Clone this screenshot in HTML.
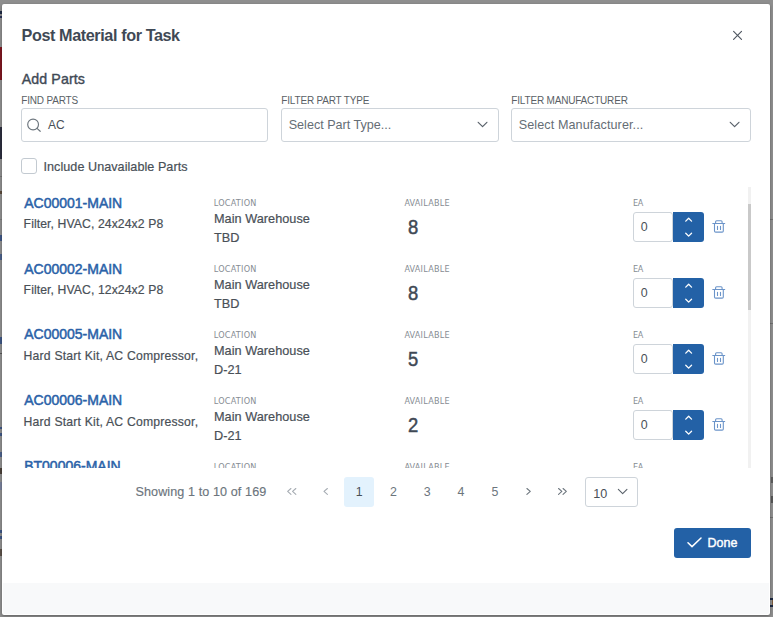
<!DOCTYPE html>
<html lang="en">
<head>
<meta charset="utf-8">
<title>Post Material for Task</title>
<style>
*{box-sizing:border-box;margin:0;padding:0}
html,body{width:773px;height:617px;overflow:hidden}
body{background:#8e8e8e;font-family:"Liberation Sans",sans-serif;color:#495057;position:relative}
.bg{position:absolute;left:0;top:0;width:773px;height:617px;overflow:hidden}
.bg i{position:absolute;display:block}
.dialog{position:absolute;left:2px;top:4px;width:768px;height:610.8px;background:#fff;border-radius:2px;box-shadow:0 1px 3px rgba(0,0,0,.32)}
.abs{position:absolute;white-space:nowrap;line-height:1}
.title{left:19.5px;top:23px;font-size:16.2px;font-weight:700;color:#3f4955;letter-spacing:-.4px}
.close{left:730px;top:26px;width:12px;height:12px}
.h2{left:19.7px;top:67.6px;font-size:14.2px;font-weight:400;color:#3f4955;letter-spacing:.12px;-webkit-text-stroke:.38px #3f4955}
.lbl{font-size:10px;color:#5a5f66;text-transform:uppercase;letter-spacing:-.18px}
.field{position:absolute;top:104px;height:33.5px;border:1px solid #ced4da;border-radius:3px;background:#fff}
.field .txt{position:absolute;top:8.5px;font-size:12.6px;line-height:14px;white-space:nowrap}
.ph{color:#656d75}
.chk{position:absolute;left:19px;top:154px;width:16px;height:16px;border:1px solid #c3cad1;border-radius:3px;background:#fff}
.chklbl{left:41.5px;top:156.5px;font-size:12.6px;color:#495057;letter-spacing:.05px;-webkit-text-stroke:.2px #495057}
.list{position:absolute;left:16px;top:182px;width:734px;height:282px;overflow:hidden}
.row{position:absolute;left:0;width:734px;height:66px}
.pn{left:6.2px;top:10.2px;font-size:14px;font-weight:400;color:#2a62a8;letter-spacing:0;-webkit-text-stroke:.5px #2a62a8}
.ds{left:5.6px;top:31.6px;font-size:12.2px;color:#495057;letter-spacing:.1px;-webkit-text-stroke:.2px #495057}
.cl{font-family:"DejaVu Sans Condensed","Liberation Sans",sans-serif;font-size:9px;color:#868c93;text-transform:uppercase;top:12.5px;letter-spacing:.25px}
.lv{left:196px;font-size:12.7px;color:#495057;letter-spacing:.03px;-webkit-text-stroke:.2px #495057}
.av{left:389.7px;top:31px;font-size:20px;font-weight:400;color:#3f4955;-webkit-text-stroke:.5px #3f4955;transform:scaleX(.92);transform-origin:0 0}
.qty{position:absolute;left:615px;top:26px;width:40px;height:30px;border:1px solid #ced4da;border-radius:3px;background:#fff}
.qty span{position:absolute;left:6.7px;top:7.8px;font-size:12.4px;line-height:13px;color:#495057}
.spin{position:absolute;left:655px;top:26px;width:31px;height:30px;background:#2361a6;border-radius:0 3px 3px 0}
.spin svg{position:absolute;left:0;top:0}
.trash{position:absolute;left:693px;top:32px;width:16px;height:16px}
.track{position:absolute;left:746px;top:182.5px;width:2.9px;height:281.5px;background:#f1f1f1}
.thumb{position:absolute;left:746px;top:199.5px;width:2.9px;height:106px;background:#c9c9c9}
.pg{top:482px;font-size:12.6px;color:#6c757d;letter-spacing:.09px;-webkit-text-stroke:.15px #6c757d}
.pgn{position:absolute;top:473px;width:30px;height:30px;border-radius:3px;text-align:center;font-size:12.4px;line-height:30px;color:#6c757d}
.pgn.on{background:#e3f2fd;color:#495057}
.pgi{position:absolute;top:473px;width:30px;height:30px}
.rpp{position:absolute;left:583px;top:473px;width:53px;height:30px;border:1px solid #ced4da;border-radius:3px;background:#fff}
.rpp span{position:absolute;left:7.3px;top:9px;font-size:12.6px;line-height:14px;color:#495057}
.done{position:absolute;left:672px;top:524px;width:77px;height:30px;background:#2361a6;border-radius:3px;color:#fff}
.done span{position:absolute;left:33.4px;top:8.6px;font-size:12.5px;line-height:13px;font-weight:400;letter-spacing:.1px;-webkit-text-stroke:.4px #fff}
.done svg{position:absolute;left:13px;top:9px}
.footer{position:absolute;left:1px;top:579px;width:766px;height:30.6px;background:#f8f9fa;border-radius:0 0 2px 2px}
</style>
</head>
<body>
<div class="bg">
  <i style="left:0;top:47px;width:2px;height:33px;background:#7e1620"></i>
  <i style="left:0;top:127px;width:2px;height:32px;background:#2b2d3d"></i>
  <i style="left:0;top:11px;width:2px;height:3px;background:#1f2a44"></i><i style="left:0;top:16px;width:2px;height:2px;background:#2a3358"></i>
  <i style="left:0;top:176px;width:2px;height:1px;background:#747474"></i>
  <i style="left:0;top:191px;width:2px;height:3px;background:#5a4a3a"></i>
  <i style="left:0;top:219px;width:2px;height:1px;background:#7a7a7a"></i>
  <i style="left:0;top:235px;width:2px;height:6px;background:#3d5583"></i>
  <i style="left:0;top:254px;width:2px;height:6px;background:#4a5f88"></i>
  <i style="left:0;top:337px;width:2px;height:7px;background:#3d5583"></i>
  <i style="left:0;top:353px;width:2px;height:1px;background:#555"></i>
  <i style="left:0;top:427px;width:2px;height:2px;background:#3d5583"></i><i style="left:0;top:433px;width:2px;height:3px;background:#3d5583"></i>
  <i style="left:0;top:452px;width:2px;height:5px;background:#4a5f88"></i>
  <i style="left:0;top:468px;width:2px;height:6px;background:#4a4038"></i>
  <i style="left:0;top:482px;width:2px;height:8px;background:#777f99"></i>
  <i style="left:0;top:530px;width:2px;height:3px;background:#3d5583"></i><i style="left:0;top:536px;width:2px;height:3px;background:#3d5583"></i>
  <i style="left:0;top:549px;width:2px;height:7px;background:#5a5048"></i>
  <i style="left:770px;top:598px;width:3px;height:2px;background:#1c2740"></i><i style="left:772px;top:600px;width:1px;height:5px;background:#7a5a3c"></i><i style="left:770px;top:605px;width:3px;height:2px;background:#1c2740"></i>
  <i style="left:771px;top:477px;width:2px;height:6px;background:#5c5c5c"></i>
  <i style="left:771px;top:496px;width:2px;height:7px;background:#555"></i>
  <i style="left:770px;top:517px;width:3px;height:1px;background:#6e6e6e"></i>
  <i style="left:770px;top:219px;width:3px;height:1px;background:#6e6e6e"></i>
  <i style="left:770px;top:323px;width:3px;height:1px;background:#6e6e6e"></i>
</div>

<div class="dialog" role="dialog" aria-label="Post Material for Task">
  <div class="abs title">Post Material for Task</div>
  <svg class="abs close" viewBox="0 0 12 12"><path d="M1.6 1.45 L9.5 9.35 M9.5 1.45 L1.6 9.35" stroke="#4f5761" stroke-width="1.15" fill="none" stroke-linecap="round"/></svg>

  <div class="abs h2">Add Parts</div>

  <div class="abs lbl" style="left:19.3px;top:91.5px">Find Parts</div>
  <div class="field" style="left:19px;width:247px">
    <svg style="position:absolute;left:5px;top:9px" width="16" height="16" viewBox="0 0 16 16"><circle cx="6.1" cy="6.5" r="5.4" stroke="#6c757d" stroke-width="1.15" fill="none"/><path d="M10 10.4 L13.2 13.3" stroke="#6c757d" stroke-width="1.15" stroke-linecap="round"/></svg>
    <span class="txt" style="left:26px;top:9px;font-size:12px;color:#495057">AC</span>
  </div>

  <div class="abs lbl" style="left:279.3px;top:91.5px">Filter Part Type</div>
  <div class="field" style="left:279px;width:218px">
    <span class="txt ph" style="left:6.7px">Select Part Type...</span>
    <svg style="position:absolute;left:194px;top:11px" width="14" height="10" viewBox="0 0 14 10"><path d="M2.2 2.3 L6.56 6.7 L10.9 2.3" stroke="#5a626b" stroke-width="1.2" fill="none" stroke-linecap="round" stroke-linejoin="round"/></svg>
  </div>

  <div class="abs lbl" style="left:509.3px;top:91.5px">Filter Manufacturer</div>
  <div class="field" style="left:509px;width:240px">
    <span class="txt ph" style="left:6.7px;letter-spacing:.1px">Select Manufacturer...</span>
    <svg style="position:absolute;left:216px;top:11px" width="14" height="10" viewBox="0 0 14 10"><path d="M2.25 2.3 L6.6 6.7 L10.95 2.3" stroke="#5a626b" stroke-width="1.2" fill="none" stroke-linecap="round" stroke-linejoin="round"/></svg>
  </div>

  <div class="chk"></div>
  <div class="abs chklbl">Include Unavailable Parts</div>

  <div class="list">
    <div class="row" style="top:0px">
      <div class="abs pn">AC00001-MAIN</div>
      <div class="abs ds">Filter, HVAC, 24x24x2 P8</div>
      <div class="abs cl" style="left:195.8px">Location</div>
      <div class="abs lv" style="top:26.5px">Main Warehouse</div>
      <div class="abs lv" style="top:46px">TBD</div>
      <div class="abs cl" style="left:386.4px">Available</div>
      <div class="abs av">8</div>
      <div class="abs cl" style="left:615px;letter-spacing:-.3px">EA</div>
      <div class="qty"><span>0</span></div>
      <div class="spin"><svg width="31" height="30" viewBox="0 0 31 30"><path d="M12.75 9.1 L15.65 6.25 L18.55 9.1 M12.75 21.3 L15.65 24.15 L18.55 21.3" stroke="#fff" stroke-width="1.3" fill="none" stroke-linecap="round" stroke-linejoin="round"/></svg></div>
      <svg class="trash" viewBox="0 0 16 16"><path d="M1.8 5.5 H13.7 M4.6 5.5 V3.8 Q4.6 2.8 5.6 2.8 H10.1 Q11.1 2.8 11.1 3.8 V5.5 M3.5 5.7 V12.9 Q3.5 14.1 4.7 14.1 H11.1 Q12.3 14.1 12.3 12.9 V5.7 M6.5 8.4 V11.4 M9.5 8.4 V11.4" stroke="#6b94c9" stroke-width="1.1" fill="none" stroke-linecap="round" stroke-linejoin="round"/></svg>
    </div>
    <div class="row" style="top:66px">
      <div class="abs pn">AC00002-MAIN</div>
      <div class="abs ds">Filter, HVAC, 12x24x2 P8</div>
      <div class="abs cl" style="left:195.8px">Location</div>
      <div class="abs lv" style="top:26.5px">Main Warehouse</div>
      <div class="abs lv" style="top:46px">TBD</div>
      <div class="abs cl" style="left:386.4px">Available</div>
      <div class="abs av">8</div>
      <div class="abs cl" style="left:615px;letter-spacing:-.3px">EA</div>
      <div class="qty"><span>0</span></div>
      <div class="spin"><svg width="31" height="30" viewBox="0 0 31 30"><path d="M12.75 9.1 L15.65 6.25 L18.55 9.1 M12.75 21.3 L15.65 24.15 L18.55 21.3" stroke="#fff" stroke-width="1.3" fill="none" stroke-linecap="round" stroke-linejoin="round"/></svg></div>
      <svg class="trash" viewBox="0 0 16 16"><path d="M1.8 5.5 H13.7 M4.6 5.5 V3.8 Q4.6 2.8 5.6 2.8 H10.1 Q11.1 2.8 11.1 3.8 V5.5 M3.5 5.7 V12.9 Q3.5 14.1 4.7 14.1 H11.1 Q12.3 14.1 12.3 12.9 V5.7 M6.5 8.4 V11.4 M9.5 8.4 V11.4" stroke="#6b94c9" stroke-width="1.1" fill="none" stroke-linecap="round" stroke-linejoin="round"/></svg>
    </div>
    <div class="row" style="top:132px">
      <div class="abs pn" style="top:9.2px">AC00005-MAIN</div>
      <div class="abs ds" style="letter-spacing:.2px">Hard Start Kit, AC Compressor,</div>
      <div class="abs cl" style="left:195.8px">Location</div>
      <div class="abs lv" style="top:26.5px">Main Warehouse</div>
      <div class="abs lv" style="top:46px">D-21</div>
      <div class="abs cl" style="left:386.4px">Available</div>
      <div class="abs av">5</div>
      <div class="abs cl" style="left:615px;letter-spacing:-.3px">EA</div>
      <div class="qty"><span>0</span></div>
      <div class="spin"><svg width="31" height="30" viewBox="0 0 31 30"><path d="M12.75 9.1 L15.65 6.25 L18.55 9.1 M12.75 21.3 L15.65 24.15 L18.55 21.3" stroke="#fff" stroke-width="1.3" fill="none" stroke-linecap="round" stroke-linejoin="round"/></svg></div>
      <svg class="trash" viewBox="0 0 16 16"><path d="M1.8 5.5 H13.7 M4.6 5.5 V3.8 Q4.6 2.8 5.6 2.8 H10.1 Q11.1 2.8 11.1 3.8 V5.5 M3.5 5.7 V12.9 Q3.5 14.1 4.7 14.1 H11.1 Q12.3 14.1 12.3 12.9 V5.7 M6.5 8.4 V11.4 M9.5 8.4 V11.4" stroke="#6b94c9" stroke-width="1.1" fill="none" stroke-linecap="round" stroke-linejoin="round"/></svg>
    </div>
    <div class="row" style="top:198px">
      <div class="abs pn" style="top:9.2px">AC00006-MAIN</div>
      <div class="abs ds" style="letter-spacing:.2px">Hard Start Kit, AC Compressor,</div>
      <div class="abs cl" style="left:195.8px">Location</div>
      <div class="abs lv" style="top:26.5px">Main Warehouse</div>
      <div class="abs lv" style="top:46px">D-21</div>
      <div class="abs cl" style="left:386.4px">Available</div>
      <div class="abs av">2</div>
      <div class="abs cl" style="left:615px;letter-spacing:-.3px">EA</div>
      <div class="qty"><span>0</span></div>
      <div class="spin"><svg width="31" height="30" viewBox="0 0 31 30"><path d="M12.75 9.1 L15.65 6.25 L18.55 9.1 M12.75 21.3 L15.65 24.15 L18.55 21.3" stroke="#fff" stroke-width="1.3" fill="none" stroke-linecap="round" stroke-linejoin="round"/></svg></div>
      <svg class="trash" viewBox="0 0 16 16"><path d="M1.8 5.5 H13.7 M4.6 5.5 V3.8 Q4.6 2.8 5.6 2.8 H10.1 Q11.1 2.8 11.1 3.8 V5.5 M3.5 5.7 V12.9 Q3.5 14.1 4.7 14.1 H11.1 Q12.3 14.1 12.3 12.9 V5.7 M6.5 8.4 V11.4 M9.5 8.4 V11.4" stroke="#6b94c9" stroke-width="1.1" fill="none" stroke-linecap="round" stroke-linejoin="round"/></svg>
    </div>
    <div class="row" style="top:264px">
      <div class="abs pn" style="top:9.2px">BT00006-MAIN</div>
      <div class="abs ds">Battery, 12V Sealed Lead Acid</div>
      <div class="abs cl" style="left:195.8px">Location</div>
      <div class="abs lv" style="top:26.5px">Main Warehouse</div>
      <div class="abs lv" style="top:46px">B-04</div>
      <div class="abs cl" style="left:386.4px">Available</div>
      <div class="abs av">12</div>
      <div class="abs cl" style="left:615px;letter-spacing:-.3px">EA</div>
      <div class="qty"><span>0</span></div>
      <div class="spin"><svg width="31" height="30" viewBox="0 0 31 30"><path d="M12.75 9.1 L15.65 6.25 L18.55 9.1 M12.75 21.3 L15.65 24.15 L18.55 21.3" stroke="#fff" stroke-width="1.3" fill="none" stroke-linecap="round" stroke-linejoin="round"/></svg></div>
      <svg class="trash" viewBox="0 0 16 16"><path d="M1.8 5.5 H13.7 M4.6 5.5 V3.8 Q4.6 2.8 5.6 2.8 H10.1 Q11.1 2.8 11.1 3.8 V5.5 M3.5 5.7 V12.9 Q3.5 14.1 4.7 14.1 H11.1 Q12.3 14.1 12.3 12.9 V5.7 M6.5 8.4 V11.4 M9.5 8.4 V11.4" stroke="#6b94c9" stroke-width="1.1" fill="none" stroke-linecap="round" stroke-linejoin="round"/></svg>
    </div>
  </div>

  <div class="track"></div>
  <div class="thumb"></div>

  <div class="abs pg" style="left:133.5px">Showing 1 to 10 of 169</div>
  <svg class="pgi" style="left:275px" viewBox="0 0 30 30"><path d="M13.95 11.5 L10.65 14.45 L13.95 17.4 M18.85 11.5 L15.55 14.45 L18.85 17.4" stroke="#a5abb2" stroke-width="1.1" fill="none" stroke-linecap="round" stroke-linejoin="round"/></svg>
  <svg class="pgi" style="left:309px" viewBox="0 0 30 30"><path d="M16.4 11.5 L13 14.45 L16.4 17.4" stroke="#a5abb2" stroke-width="1.1" fill="none" stroke-linecap="round" stroke-linejoin="round"/></svg>
  <div class="pgn on" style="left:342.3px">1</div>
  <div class="pgn" style="left:376.5px">2</div>
  <div class="pgn" style="left:410.3px">3</div>
  <div class="pgn" style="left:444px">4</div>
  <div class="pgn" style="left:478px">5</div>
  <svg class="pgi" style="left:511px" viewBox="0 0 30 30"><path d="M13.9 11.5 L17.3 14.45 L13.9 17.4" stroke="#6c757d" stroke-width="1.1" fill="none" stroke-linecap="round" stroke-linejoin="round"/></svg>
  <svg class="pgi" style="left:546px" viewBox="0 0 30 30"><path d="M10.55 11.5 L13.85 14.45 L10.55 17.4 M15.05 11.5 L18.35 14.45 L15.05 17.4" stroke="#6c757d" stroke-width="1.1" fill="none" stroke-linecap="round" stroke-linejoin="round"/></svg>
  <div class="rpp"><span>10</span>
    <svg style="position:absolute;left:30px;top:9px" width="14" height="10" viewBox="0 0 14 10"><path d="M2.35 2.45 L6.65 6.7 L10.95 2.45" stroke="#5a626b" stroke-width="1.1" fill="none" stroke-linecap="round" stroke-linejoin="round"/></svg>
  </div>

  <div class="done"><svg width="15" height="11" viewBox="0 0 15 11"><path d="M1 5.8 L5 9.6 L14 1" stroke="#fff" stroke-width="1.5" fill="none" stroke-linecap="round" stroke-linejoin="round"/></svg><span>Done</span></div>

  <div class="footer"></div>
</div>
</body>
</html>
